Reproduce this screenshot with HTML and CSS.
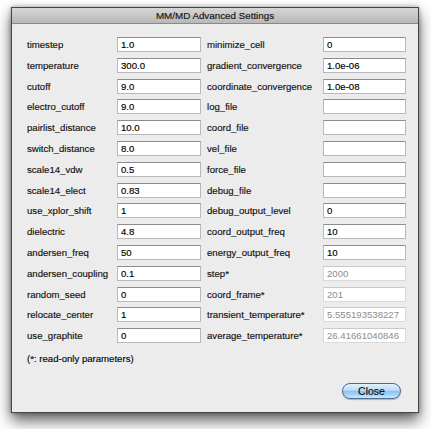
FILE: index.html
```html
<!DOCTYPE html>
<html>
<head>
<meta charset="utf-8">
<link rel="stylesheet" href="styles.css">
</head>
<body>
<div class="window">
  <div class="titlebar">MM/MD Advanced Settings</div>
  <div class="content">
    <div class="grid">
      <div class="lbl">timestep</div><div class="fld">1.0</div>
      <div class="lbl">minimize_cell</div><div class="fld">0</div>

      <div class="lbl">temperature</div><div class="fld">300.0</div>
      <div class="lbl">gradient_convergence</div><div class="fld">1.0e-06</div>

      <div class="lbl">cutoff</div><div class="fld">9.0</div>
      <div class="lbl">coordinate_convergence</div><div class="fld">1.0e-08</div>

      <div class="lbl">electro_cutoff</div><div class="fld">9.0</div>
      <div class="lbl">log_file</div><div class="fld"></div>

      <div class="lbl">pairlist_distance</div><div class="fld">10.0</div>
      <div class="lbl">coord_file</div><div class="fld"></div>

      <div class="lbl">switch_distance</div><div class="fld">8.0</div>
      <div class="lbl">vel_file</div><div class="fld"></div>

      <div class="lbl">scale14_vdw</div><div class="fld">0.5</div>
      <div class="lbl">force_file</div><div class="fld"></div>

      <div class="lbl">scale14_elect</div><div class="fld">0.83</div>
      <div class="lbl">debug_file</div><div class="fld"></div>

      <div class="lbl">use_xplor_shift</div><div class="fld">1</div>
      <div class="lbl">debug_output_level</div><div class="fld">0</div>

      <div class="lbl">dielectric</div><div class="fld">4.8</div>
      <div class="lbl">coord_output_freq</div><div class="fld">10</div>

      <div class="lbl">andersen_freq</div><div class="fld">50</div>
      <div class="lbl">energy_output_freq</div><div class="fld">10</div>

      <div class="lbl">andersen_coupling</div><div class="fld">0.1</div>
      <div class="lbl">step*</div><div class="fld ro">2000</div>

      <div class="lbl">random_seed</div><div class="fld">0</div>
      <div class="lbl">coord_frame*</div><div class="fld ro">201</div>

      <div class="lbl">relocate_center</div><div class="fld">1</div>
      <div class="lbl">transient_temperature*</div><div class="fld ro">5.555193538227</div>

      <div class="lbl">use_graphite</div><div class="fld">0</div>
      <div class="lbl">average_temperature*</div><div class="fld ro">26.41661040846</div>
    </div>
    <div class="note">(*: read-only parameters)</div>
    <div class="buttons">
      <div class="btn">Close</div>
    </div>
  </div>
</div>
</body>
</html>
```

FILE: styles.css
```css
html, body {
  margin: 0;
  padding: 0;
  background: #ffffff;
}

body {
  font-family: "Liberation Sans", Arial, sans-serif;
  font-size: 9.6px;
  color: #000;
  height: 429px;
}

.window {
  margin: 7px 0 0 11px;
  width: 408px;
  height: 406px;
  box-sizing: border-box;
  border: 1px solid #454545;
  background: #ececec;
  box-shadow: 0 8px 14px rgba(0, 0, 0, 0.6), 0 0 5px rgba(0, 0, 0, 0.35);
  display: flex;
  flex-direction: column;
}

.titlebar {
  height: 15px;
  flex: none;
  background: linear-gradient(#d6d6d6, #b8b8b8);
  border-bottom: 1px solid #8a8a8a;
  text-align: center;
  line-height: 15px;
  font-size: 9.8px;
  color: #1a1a1a;
  -webkit-text-stroke: 0.2px #1a1a1a;
}

.content {
  flex: 1;
  padding: 13px 12px 0 15px;
  display: flex;
  flex-direction: column;
}

.grid {
  display: grid;
  grid-template-columns: 90px 84px 6px 116px 83px;
  grid-auto-rows: 15px;
  row-gap: 5.8px;
}

.grid > .lbl:nth-child(4n+3) {
  grid-column: 4;
}

.lbl {
  line-height: 15px;
  white-space: nowrap;
  color: #111;
  -webkit-text-stroke: 0.15px #111;
}

.fld {
  box-sizing: border-box;
  height: 15px;
  background: #fff;
  border: 1px solid #b9b9b9;
  border-top-color: #8c8c8c;
  padding: 0 3px;
  line-height: 13px;
  white-space: nowrap;
  overflow: hidden;
  color: #000;
  -webkit-text-stroke: 0.15px #000;
}

.fld.ro {
  color: #8d8d8d;
  border-color: #dadada;
  border-top-color: #c9c9c9;
  padding-right: 0;
  -webkit-text-stroke: 0;
}

.note {
  margin-top: 10px;
  line-height: 12px;
  -webkit-text-stroke: 0.15px #111;
}

.buttons {
  display: flex;
  justify-content: flex-end;
  margin-top: 18px;
  padding-right: 5px;
}

.btn {
  width: 59px;
  height: 16px;
  box-sizing: border-box;
  border: 1px solid #4d6a94;
  border-radius: 8px;
  background: linear-gradient(#e2f0fc 0%, #bddbf7 45%, #8cc2f1 52%, #a9d6fb 80%, #cdebff 100%);
  text-align: center;
  line-height: 14px;
  font-size: 10.5px;
  color: #0b0b0b;
  -webkit-text-stroke: 0.15px #0b0b0b;
  box-shadow: 0 1px 1px rgba(0, 0, 0, 0.25);
}
```
